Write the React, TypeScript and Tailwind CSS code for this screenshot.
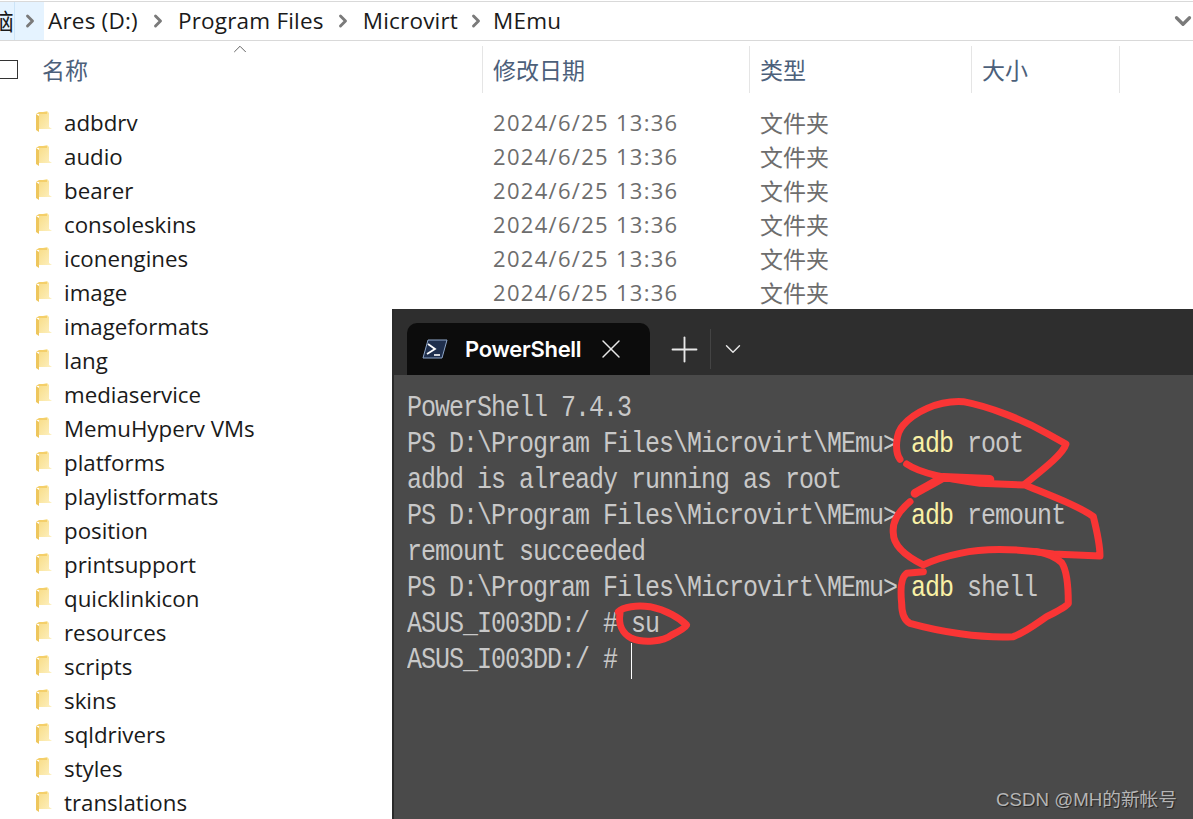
import { Fragment } from "react";
import { ChevronDown, ChevronRight, ChevronUp, Plus, X } from "lucide-react";

const FOLDERS = [
  "adbdrv", "audio", "bearer", "consoleskins", "iconengines", "image", "imageformats",
  "lang", "mediaservice", "MemuHyperv VMs", "platforms", "playlistformats", "position",
  "printsupport", "quicklinkicon", "resources", "scripts", "skins", "sqldrivers", "styles",
  "translations",
];

const CRUMBS = [
  { label: "Ares (D:)", gap: "mx-[10px]" },
  { label: "Program Files", gap: "mx-[9.5px]" },
  { label: "Microvirt", gap: "mx-[7.5px]" },
  { label: "MEmu", gap: "" },
];

const LINES = [
  ["PowerShell 7.4.3"],
  ["PS D:\\Program Files\\Microvirt\\MEmu> ", "adb", " root"],
  ["adbd is already running as root"],
  ["PS D:\\Program Files\\Microvirt\\MEmu> ", "adb", " remount"],
  ["remount succeeded"],
  ["PS D:\\Program Files\\Microvirt\\MEmu> ", "adb", " shell"],
  ["ASUS_I003DD:/ # su"],
];

function FolderIcon() {
  return (
    <svg width="18" height="22" viewBox="0 0 18 22" className="shrink-0">
      <defs>
        <linearGradient id="fold" x1="0" y1="0" x2="1" y2="1">
          <stop offset="0" stopColor="#f8dc85" />
          <stop offset="1" stopColor="#fdf0c0" />
        </linearGradient>
      </defs>
      <path d="M1 3 L1 19 L4 21 L4 5 Z" fill="#eec65c" />
      <path d="M4 2 L12 0 L14 2 L14 16 L17 18 L4 18 Z" fill="url(#fold)" />
      <path d="M1 3 L4 1 L12 1 L12 3 Z" fill="#f4cf6a" />
    </svg>
  );
}

function PsIcon() {
  return (
    <svg width="26" height="20" viewBox="0 0 26 20" className="shrink-0">
      <path d="M6 1 H25 L20 19 H1 Z" fill="#1f2f4d" stroke="#8ea6c9" strokeWidth="1" />
      <path d="M6 5 L13 10 L5 15" fill="none" stroke="#fff" strokeWidth="1.8" />
      <path d="M12 16 H18" stroke="#fff" strokeWidth="1.6" />
    </svg>
  );
}

function Scribbles() {
  return (
    <svg width="1193" height="819" viewBox="0 0 1193 819" className="absolute left-0 top-0 pointer-events-none">
      <g fill="none" stroke="#f93535" strokeWidth="21" strokeLinecap="round" strokeLinejoin="round" transform="translate(880 390) scale(0.3333)">
        <path d="M60 208 C44 185 46 130 70 105 C100 70 170 30 250 35 C330 50 430 90 500 130 L558 162 C550 190 500 230 435 282" />
        <path d="M80 222 C120 250 200 265 300 280 L435 285 C520 320 600 350 640 380 C650 420 660 460 660 498 L520 492 C440 480 330 470 240 490 C190 500 150 515 130 525 C80 500 40 470 40 430 C35 390 60 360 90 335" />
        <path d="M105 310 C130 295 160 280 190 262 L330 268" strokeWidth="26" />
        <path d="M130 545 L80 550 C65 560 60 590 65 640 C65 670 70 690 90 700 C180 725 300 745 400 740 C440 725 470 700 500 680 C530 665 560 650 565 640 C565 590 560 540 545 518 C530 505 500 490 470 485" />
      </g>
      <g fill="none" stroke="#f93535" strokeWidth="21" strokeLinecap="round" strokeLinejoin="round" transform="translate(600 590) scale(0.3333)">
        <path d="M60 70 C55 100 65 130 95 145 C130 160 190 155 215 135 C235 125 255 115 260 105 C240 85 200 60 150 50 C110 45 70 50 55 65" />
      </g>
    </svg>
  );
}

function Terminal() {
  return (
    <div className="absolute left-[392px] top-[309px] w-[801px] h-[510px] flex flex-col border-l-2 border-[#2a2a2a] font-['Liberation_Mono',monospace]">
      <div className="h-[66px] bg-[#2e2e2e] flex items-end pl-[13px]">
        <div className="w-[243px] h-[52px] bg-[#0c0c0c] rounded-t-[10px] flex items-center pl-[15px] font-['Inter','Noto_Sans',sans-serif] text-white">
          <PsIcon />
          <span className="ml-[17px] text-[22px] font-semibold tracking-[-0.3px]">PowerShell</span>
          <X size={32} strokeWidth={1.1} className="ml-[14px] text-[#e8e8e8]" />
        </div>
        <div className="h-[52px] flex items-center">
          <Plus size={41} strokeWidth={1.1} className="ml-[14px] text-[#e8e8e8]" />
          <div className="ml-[5px] w-px h-[40px] bg-[#444]" />
          <ChevronDown size={26} strokeWidth={1.3} className="ml-[9px] text-[#e8e8e8]" />
        </div>
      </div>
      <div className="flex-1 bg-[#4a4a4a] pt-[16px] pl-[13px] text-[25px] tracking-[-1px] leading-[36px] text-[#c8c8c8] whitespace-pre">
        {LINES.map((parts, i) => (
          <div key={i} className="h-[36px] scale-y-[1.2]">
            {parts[0]}
            {parts[1] && <span className="text-[#f9f1a5]">{parts[1]}</span>}
            {parts[2]}
          </div>
        ))}
        <div className="h-[36px] flex items-center">
          <span className="scale-y-[1.2]">ASUS_I003DD:/ # </span>
          <span className="inline-block w-px h-[36px] bg-white" />
        </div>
      </div>
    </div>
  );
}

export default function App() {
  return (
    <div className="relative w-[1193px] h-[819px] overflow-hidden bg-white font-['Open_Sans','Noto_Sans_CJK_SC',sans-serif]">
      {/* address bar */}
      <div className="mt-[1px] h-[40px] border-y border-[#d9d9d9] flex items-center text-[22.5px] tracking-[0.2px] text-[#1a1a1a]">
        <div className="h-full w-[44px] bg-[#e5f3ff] flex items-center overflow-hidden">
          <span className="w-[15px] shrink-0 flex justify-end border-r border-[#cce4f7] h-full items-center overflow-hidden font-['Noto_Sans_CJK_SC',sans-serif]"><span className="shrink-0">脑</span></span>
          <ChevronRight size={20} strokeWidth={3.5} className="ml-[5px] shrink-0 text-[#7a7a7a]" />
        </div>
        <div className="ml-[4px] flex items-center flex-1">
          {CRUMBS.map((c, i) => (
            <Fragment key={c.label}>
              <span>{c.label}</span>
              {i < CRUMBS.length - 1 && <ChevronRight size={20} strokeWidth={3.5} className={`${c.gap} text-[#7a7a7a]`} />}
            </Fragment>
          ))}
        </div>
        <ChevronDown size={26} strokeWidth={3} className="mr-[-3px] text-[#7a7a7a]" />
      </div>

      {/* column headers */}
      <div className="relative mt-[5px] h-[47px] flex items-center text-[23px] text-[#4c607a] font-['Noto_Sans_CJK_SC',sans-serif]">
        <div className="w-[483px] h-full flex items-center border-r border-[#e5e5e5]">
          <span className="w-[18px] h-[19px] border border-[#333] border-l-0" />
          <span className="ml-[24px]">名称</span>
        </div>
        <div className="w-[267px] h-full flex items-center pl-[10px] border-r border-[#e5e5e5]">修改日期</div>
        <div className="w-[222px] h-full flex items-center pl-[10px] border-r border-[#e5e5e5]">类型</div>
        <div className="w-[148px] h-full flex items-center pl-[10px] border-r border-[#e5e5e5]">大小</div>
        <ChevronUp size={22} strokeWidth={1} className="absolute left-[229px] top-[-8px] text-[#555]" />
      </div>

      {/* rows */}
      <div className="mt-[12px] text-[22.3px] leading-[34px]">
        {FOLDERS.map((name) => (
          <div key={name} className="h-[34px] flex items-center">
            <div className="w-[483px] flex items-center pl-[35px]">
              <FolderIcon />
              <span className="ml-[11px] mt-[2px] text-[#1a1a1a]">{name}</span>
            </div>
            <div className="w-[267px] pl-[10px] text-[22px] tracking-[1.3px] text-[#6d6d6d]">2024/6/25 13:36</div>
            <div className="pl-[10px] text-[23px] text-[#6d6d6d] font-['Noto_Sans_CJK_SC',sans-serif]">文件夹</div>
          </div>
        ))}
      </div>

      <Terminal />
      <Scribbles />
      <div className="absolute right-[16px] bottom-[6px] text-[18.7px] leading-[26px] text-[#b5b5b5] [text-shadow:1px_1px_1px_#222] font-['Liberation_Sans','Noto_Sans_CJK_SC',sans-serif]">CSDN @MH的新帐号</div>
    </div>
  );
}
